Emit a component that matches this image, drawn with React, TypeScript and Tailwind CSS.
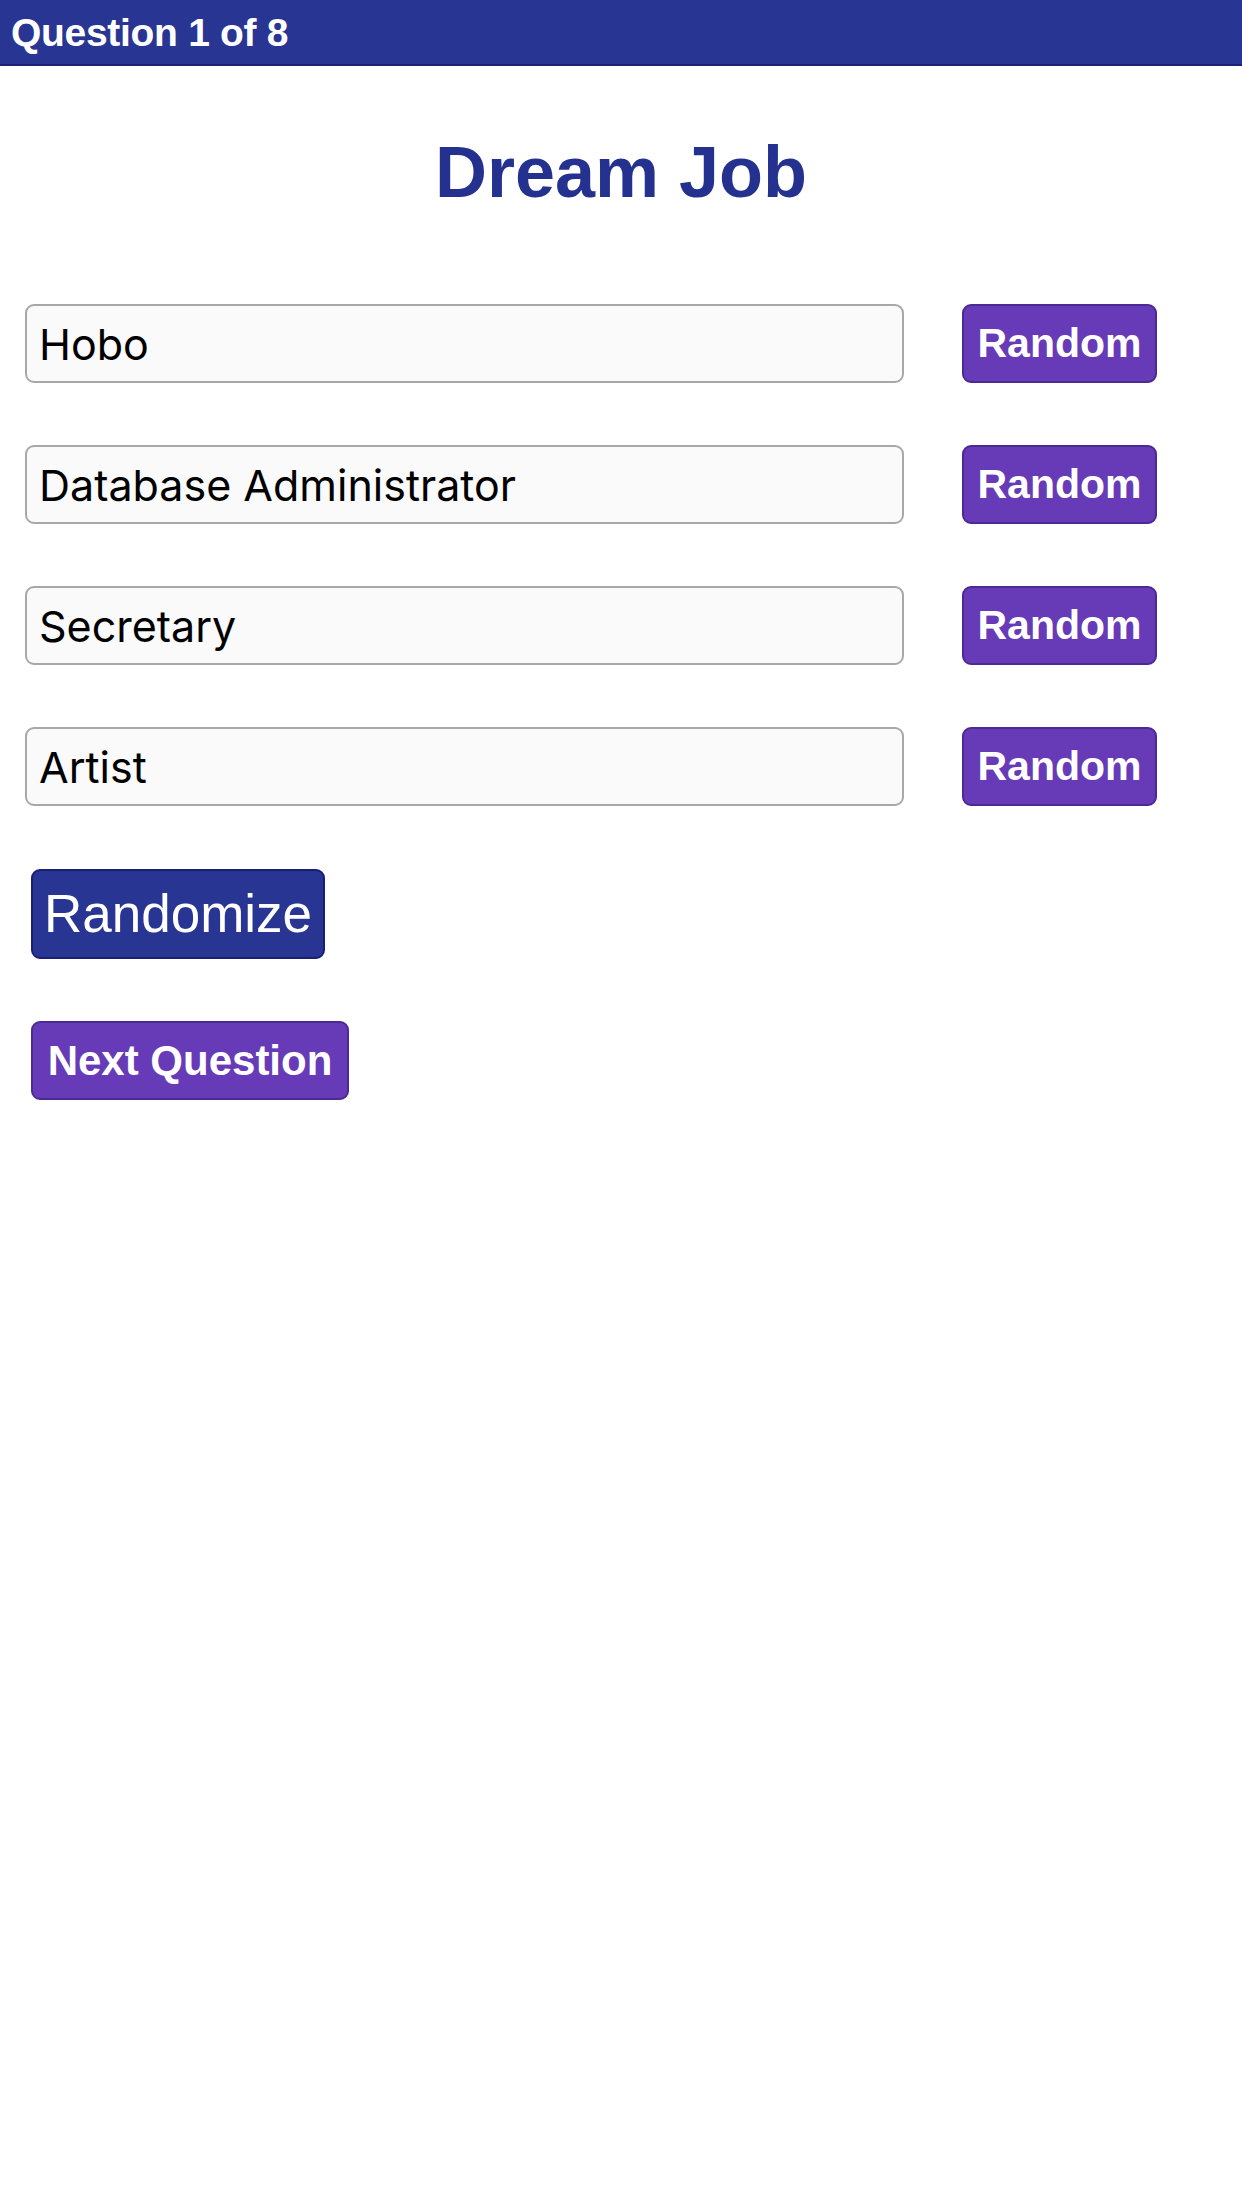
const jobs = ['Hobo', 'Database Administrator', 'Secretary', 'Artist'];

function JobRow({ value }: { value: string }) {
  return (
    <div className="flex items-center gap-[58px]">
      <input
        type="text"
        defaultValue={value}
        className="h-[79px] w-[879px] rounded-[9px] border-2 border-[#a8a8a8] bg-[#fafafa] px-[12px] text-[43px] text-black outline-none [font-family:Inter,'Liberation_Sans',sans-serif]"
      />
      <button
        type="button"
        className="h-[79px] w-[195px] rounded-[9px] border-2 border-[#4b2a96] bg-[#673ab7] text-[41px] font-bold text-white">
        Random
      </button>
    </div>
  );
}

export default function App() {
  return (
    <div className="min-h-[2208px] bg-white [font-family:'Liberation_Sans',Arial,sans-serif]">
      <header className="flex h-[66px] items-center border-b-2 border-[#1b2178] bg-[#283593] px-[11px]">
        <span className="text-[39px] leading-none font-bold tracking-[-0.3px] text-white">
          Question 1 of 8
        </span>
      </header>

      <h1 className="mt-[70px] text-center text-[72px] leading-none font-bold text-[#24318f]">
        Dream Job
      </h1>

      <div className="mt-[96px] flex flex-col gap-[62px] px-[25px]">
        {jobs.map((job) => (
          <JobRow key={job} value={job} />
        ))}
      </div>

      <div className="mt-[63px] flex flex-col items-start gap-[62px] px-[31px]">
        <button
          type="button"
          className="h-[90px] w-[294px] rounded-[9px] border-2 border-[#1a1f73] bg-[#283593] pr-[10px] pl-[11px] text-left text-[53px] text-white">
          Randomize
        </button>
        <button
          type="button"
          className="h-[79px] w-[318px] rounded-[9px] border-2 border-[#4b2a96] bg-[#673ab7] text-[42px] font-bold text-white">
          Next Question
        </button>
      </div>
    </div>
  );
}
